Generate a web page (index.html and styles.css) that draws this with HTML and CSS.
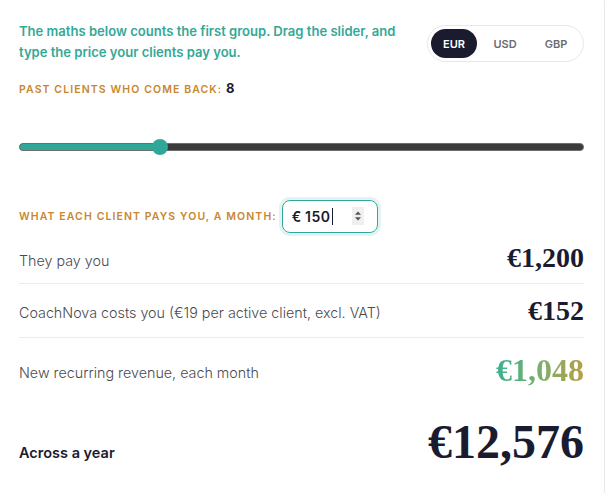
FILE: index.html
```html
<!DOCTYPE html>
<html>
<head>
<meta charset="utf-8">
<link rel="stylesheet" href="styles.css">
</head>
<body>
<div class="card">
  <div class="head">
    <p class="intro">The maths below counts the first group. Drag the slider, and type the price your clients pay you.</p>
    <div class="toggle">
      <span class="opt active">EUR</span>
      <span class="opt">USD</span>
      <span class="opt">GBP</span>
    </div>
  </div>
  <div class="label">PAST CLIENTS WHO COME BACK: <b class="count">8</b></div>
  <div class="slider">
    <div class="fill" style="width: 24.8%"></div>
    <div class="thumb" style="left: 24.8%"></div>
  </div>
  <div class="price-row">
    <span class="label">WHAT EACH CLIENT PAYS YOU, A MONTH:</span>
    <div class="input">
      <span class="val"><span class="eur">€</span>150</span><span class="caret"></span>
      <span class="spin"><svg width="8" height="12" viewBox="0 0 8 12"><path d="M4 1.5 L7 4.8 H1 Z M4 10.5 L1 7.2 H7 Z" fill="#555"/></svg></span>
    </div>
  </div>
  <div class="row line first"><span class="txt">They pay you</span><span class="num">€1,200</span></div>
  <div class="row line"><span class="txt">CoachNova costs you (€19 per active client, excl. VAT)</span><span class="num">€152</span></div>
  <div class="row tall"><span class="txt">New recurring revenue, each month</span><span class="num grad">€1,048</span></div>
  <div class="total"><span class="ttxt">Across a year</span><span class="num big">€12,576</span></div>
</div>
</body>
</html>
```
FILE: styles.css
```css
html, body { margin: 0; padding: 0; background: #fff; overflow: hidden; }
body { font-family: "Inter", "Lato", sans-serif; color: #1b1b2f; }
.card {
  box-sizing: border-box;
  width: 625px;
  height: 520px;
  margin: -14px 0 0 -20px;
  padding: 34px 20px 0 38px;
  border: 1px solid #e9e7e1;
  border-radius: 16px;
}
.head { display: flex; justify-content: space-between; align-items: flex-start; }
.intro {
  margin: 0;
  width: 398px;
  font-size: 13.05px;
  line-height: 21px;
  font-weight: 600;
  color: #35a897;
}
.toggle {
  margin-top: 4px;
  display: flex;
  gap: 5px;
  padding: 3px 4px 3px 3px;
  border: 1px solid #e7e7e7;
  border-radius: 20px;
}
.opt {
  display: flex; align-items: center; justify-content: center;
  height: 29px; width: 46px;
  border-radius: 15px;
  font-size: 11px; font-weight: 600; color: #6b6b73;
}
.opt.active { background: #1b1b2f; color: #fff; }
.label {
  font-size: 10.5px;
  font-weight: 600;
  letter-spacing: 1.1px;
  color: #c8872e;
}
.card > .label { margin-top: 17px; line-height: 16px; }
.count { font-size: 13px; color: #1b1b2f; letter-spacing: 0; font-weight: 700; }
.slider {
  position: relative;
  margin-top: 45px;
  height: 8px;
  box-sizing: border-box;
  border: 1px solid #6e6e6e;
  border-radius: 4px;
  background: #3b3b3b;
}
.fill { height: 100%; background: #2fa899; border-radius: 4px 0 0 4px; }
.thumb {
  position: absolute; top: 50%;
  width: 16px; height: 16px; margin: -8px 0 0 -8px;
  border-radius: 50%; background: #2fa899;
}
.price-row { display: flex; align-items: center; gap: 5px; margin-top: 49px; }
.input {
  position: relative;
  box-sizing: border-box;
  width: 96px; height: 33px;
  border: 1.5px solid #2fa899;
  border-radius: 8px;
  box-shadow: 0 0 0 3px #e3f3f1;
  display: flex; align-items: center;
  padding: 0 0 0 9px;
}
.val { font-size: 14px; font-weight: 600; letter-spacing: 0.6px; color: #1b1b2f; }
.eur { margin-right: 3px; }
.caret { width: 1px; height: 17px; background: #1b1b2f; margin-left: 1px; }
.spin {
  position: absolute; right: 13px; top: 6px;
  width: 12px; height: 18px; background: #efefef;
  display: flex; align-items: center; justify-content: center;
}
.row {
  display: flex; justify-content: space-between; align-items: center;
  height: 53px;
}
.row.first { height: 50px; }
.row.tall { height: 64px; }
.line { border-bottom: 1px solid #efece4; }
.txt { font-size: 14.3px; font-weight: 300; color: #4a4a50; padding-top: 4px; }
.num {
  font-family: "Liberation Serif", serif;
  font-weight: 700;
  font-size: 28px;
  color: #1b1b2f;
  letter-spacing: 0;
}
.grad {
  font-size: 32px;
  background: linear-gradient(90deg, #3cb08f, #7cae6c 50%, #b89e45);
  -webkit-background-clip: text; background-clip: text;
  color: transparent;
}
.total {
  display: flex; justify-content: space-between; align-items: baseline;
  margin-top: 12px;
}
.ttxt { font-size: 14.5px; font-weight: 600; color: #1b1b2f; }
.big { font-size: 48px; letter-spacing: 0; }
```
